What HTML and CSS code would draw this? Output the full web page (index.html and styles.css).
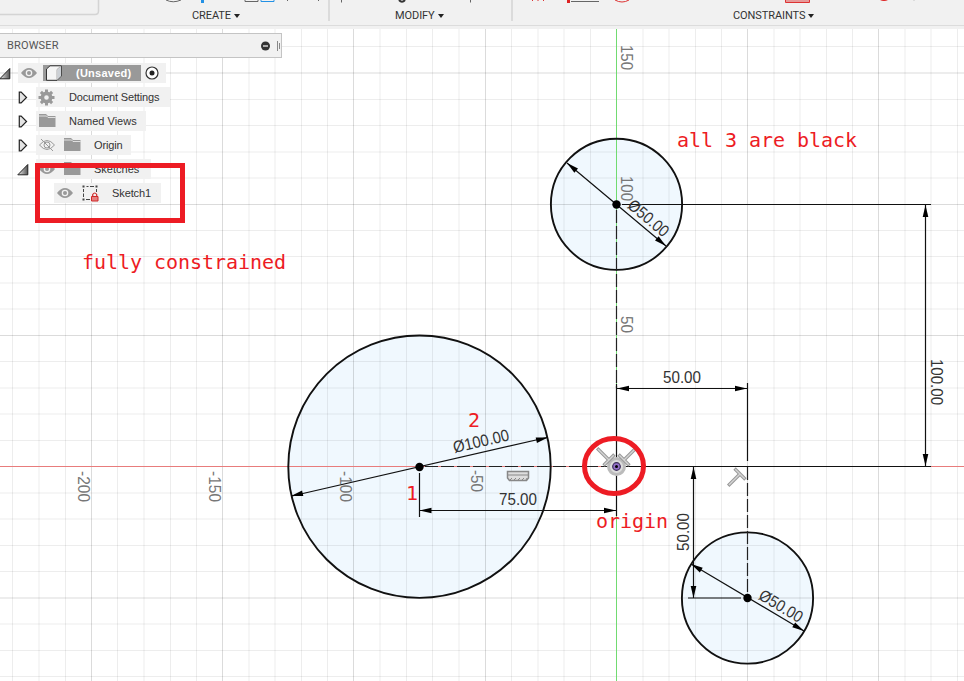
FILE: index.html
```
<!DOCTYPE html>
<html lang="en">
<head>
<meta charset="utf-8">
<title>Sketch</title>
<link rel="stylesheet" href="styles.css">
</head>
<body>
<svg class="canvas" width="964" height="681" viewBox="0 0 964 681">
  <defs>
    <path id="arrow" d="M0 0L-12 -2.8V2.8Z"/>
    <g id="perp" fill="none" stroke-linecap="square"><path class="glyph-edge" d="M-6 0H6M0 0V15"/><path class="glyph-core" d="M-6 0H6M0 0V15"/></g>
  </defs>
  <g class="fill"><circle cx="616.5" cy="204.3" r="65.6"/><circle cx="419.5" cy="466.7" r="131.2"/><circle cx="747.5" cy="598" r="65.6"/></g>
  <path class="minor" d="M12.5 0V681M39 0V681M65.5 0V681M117.5 0V681M144 0V681M170.5 0V681M196.5 0V681M249 0V681M275 0V681M301.5 0V681M327.5 0V681M380 0V681M406.5 0V681M432.5 0V681M459 0V681M511.5 0V681M538 0V681M564 0V681M590.5 0V681M643 0V681M669 0V681M695.5 0V681M721.5 0V681M774 0V681M800 0V681M826.5 0V681M852.5 0V681M905 0V681M931 0V681M957.5 0V681M0 46.5H964M0 99.5H964M0 125.5H964M0 152H964M0 178H964M0 230.5H964M0 256.5H964M0 283H964M0 309H964M0 361.5H964M0 388H964M0 414H964M0 440.5H964M0 493H964M0 519H964M0 545.5H964M0 571.5H964M0 624H964M0 650.5H964M0 676.5H964"/>
  <path class="major" d="M91.5 0V681M222.5 0V681M353.5 0V681M485.5 0V681M747.5 0V681M878.5 0V681M0 73H964M0 204.5H964M0 335.5H964M0 598H964"/>
  <path class="x-axis" d="M0 466.5H964"/>
  <path class="y-axis" d="M616.5 0V681"/>
  <g class="scale">
    <text transform="translate(621 45) rotate(90)" textLength="25" lengthAdjust="spacingAndGlyphs">150</text>
    <text transform="translate(621 176) rotate(90)" textLength="25" lengthAdjust="spacingAndGlyphs">100</text>
    <text transform="translate(621 316) rotate(90)" textLength="17" lengthAdjust="spacingAndGlyphs">50</text>
    <text transform="translate(77.500 471) rotate(90)" textLength="31" lengthAdjust="spacingAndGlyphs">-200</text>
    <text transform="translate(208.500 471) rotate(90)" textLength="31" lengthAdjust="spacingAndGlyphs">-150</text>
    <text transform="translate(340 471) rotate(90)" textLength="31" lengthAdjust="spacingAndGlyphs">-100</text>
    <text transform="translate(471 470) rotate(90)" textLength="22" lengthAdjust="spacingAndGlyphs">-50</text>
  </g>
  <g class="outline"><circle cx="616.5" cy="204.3" r="65.6"/><circle cx="419.5" cy="466.7" r="131.2"/><circle cx="747.5" cy="598" r="65.6"/></g>
  <path class="dashed" d="M616.5 210V388M425 466.5H616M747.5 467V592"/>
  <path class="thin" d="M616.5 384V516M616 466.5H747M747 466.5H931M622 204.5H931M747.5 383V461M419.5 473V517M419.5 510.5H616M616.5 388.5H747M925.5 205V466M693.5 467V598M688 598H741M567 163L666 246M292 496L547 437.500M692 564.500L804 631"/>
  <g>
    <use href="#arrow" transform="translate(567 163) rotate(220)"/><use href="#arrow" transform="translate(666 246) rotate(40)"/>
    <use href="#arrow" transform="translate(291 496) rotate(167)"/><use href="#arrow" transform="translate(548 437.5) rotate(-13)"/>
    <use href="#arrow" transform="translate(691 564) rotate(211)"/><use href="#arrow" transform="translate(804 631) rotate(31)"/>
    <use href="#arrow" transform="translate(419.500 510.500) rotate(180)"/><use href="#arrow" transform="translate(616 510.500)"/>
    <use href="#arrow" transform="translate(617 388.500) rotate(180)"/><use href="#arrow" transform="translate(747 388.500)"/>
    <use href="#arrow" transform="translate(925.500 205) rotate(-90)"/><use href="#arrow" transform="translate(925.500 466) rotate(90)"/>
    <use href="#arrow" transform="translate(693.500 467) rotate(-90)"/><use href="#arrow" transform="translate(693.500 598) rotate(90)"/>
    <circle cx="616.500" cy="204.500" r="4.200"/><circle cx="419.500" cy="467" r="4.200"/><circle cx="747.500" cy="598" r="4.200"/>
  </g>
  <g class="dimension">
    <text x="663" y="383" textLength="38" lengthAdjust="spacingAndGlyphs">50.00</text>
    <text x="499" y="505" textLength="38" lengthAdjust="spacingAndGlyphs">75.00</text>
    <text transform="translate(931 359) rotate(90)" textLength="46" lengthAdjust="spacingAndGlyphs">100.00</text>
    <text transform="translate(688.500 551) rotate(-90)" textLength="38" lengthAdjust="spacingAndGlyphs">50.00</text>
    <text transform="translate(454.500 453) rotate(-13)" textLength="57" lengthAdjust="spacingAndGlyphs">Ø100.00</text>
    <text transform="translate(626.500 207) rotate(40)" textLength="48" lengthAdjust="spacingAndGlyphs">Ø50.00</text>
    <text transform="translate(757.500 598.500) rotate(31)" textLength="48" lengthAdjust="spacingAndGlyphs">Ø50.00</text>
  </g>
  <g>
    <circle class="origin-halo" cx="616.500" cy="466.500" r="8"/>
    <use href="#perp" transform="translate(609 460) rotate(135)"/>
    <use href="#perp" transform="translate(624 460) rotate(225)"/>
    <use href="#perp" transform="translate(740 474) rotate(45)"/>
    <circle class="origin-dot" cx="616.500" cy="466.500" r="3.800"/><circle cx="616.500" cy="466.500" r="1.500"/>
    <path class="ruler" d="M507.500 471.500H528.500V478L526.500 480.500H509.500L507.500 478Z"/>
    <path class="ruler-lines" d="M508 475H528M510 480l2-2m2 2l2-2m2 2l2-2m2 2l2-2m2 2l1-2"/>
  </g>
  <ellipse class="mark-ring" cx="614" cy="466" rx="29.500" ry="27.500"/>
  <g class="note">
    <text x="677" y="147" textLength="180">all 3 are black</text>
    <text x="82" y="269" textLength="204">fully constrained</text>
    <text x="596" y="528" textLength="72">origin</text>
    <text x="406" y="500">1</text><text x="468" y="427">2</text>
  </g>
</svg>

<header class="toolbar">
  <svg class="toolbar-icons" width="964" height="28" viewBox="0 0 964 28">
    <path class="frame" d="M0 14.500H95Q98.500 14.500 98.500 11V0"/>
    <path class="divider" d="M329 0V21M512 0V21"/>
    <path class="dark-line" d="M166 0Q173 3.500 181 0M245 0V1.500H258V0M287.500 0V1M318.500 0V1M341.500 0V2.500M470.500 0V2.500M571 1.500H599"/>
    <path class="blue-line" d="M261 0V1.500H274V0"/><path class="blue-fill" d="M201 0h3v3h-3z"/>
    <path class="dark-curve" d="M399 0Q402 3.500 405 0"/>
    <path class="red-line" d="M533 0l-1 1M538 0v1M543 0l1 1M615 0Q622 4 629 0"/>
    <path class="red-fill" d="M567 0h3v3h-3zM880 0h8q-4 2-8 0z"/>
    <path class="red-box" d="M785.500 0V2.500H809.500V0"/><path class="divider" d="M914 0v1"/>
  </svg>
  <span class="menu create">CREATE</span>
  <span class="menu modify">MODIFY</span>
  <span class="menu constraints">CONSTRAINTS</span>
</header>

<aside class="browser">
  <div class="panel-head"><span class="panel-title">BROWSER</span>
    <svg width="20" height="16" viewBox="0 0 20 16"><circle cx="5.500" cy="8" r="4.500" fill="#333"/><path d="M3 8H8" stroke="#fff" stroke-width="1.200"/><path d="M17.500 3V13M19.500 5V11" stroke="#888"/></svg>
  </div>
  <svg class="symbols" width="0" height="0">
    <symbol id="open" viewBox="0 0 12 12"><linearGradient id="g"><stop offset="0" stop-color="#eee"/><stop offset="1" stop-color="#555"/></linearGradient><path d="M.8 11.300L10.800 1V11.300Z" fill="url(#g)" stroke="#222"/></symbol>
    <symbol id="closed" viewBox="0 0 12 14"><path d="M2 1.200H4L9.800 7L4 12.800H2Z" fill="#e4e4e4" stroke="#222" stroke-width="1.300"/></symbol>
    <symbol id="eye" viewBox="0 0 16 12"><path d="M0 6Q8-4 16 6Q8 16 0 6Z" fill="#999"/><circle cx="8" cy="6" r="3.300" fill="#f2f2f2"/><circle cx="8" cy="6" r="2" fill="#999"/></symbol>
    <symbol id="eye-off" viewBox="0 0 16 12"><path d="M.5 6Q8-3 15.500 6Q8 15 .5 6ZM2 0L14 12" fill="none" stroke="#999"/><circle cx="8" cy="6" r="3" fill="none" stroke="#999"/></symbol>
    <symbol id="folder" viewBox="0 0 17 14"><path d="M0 0H7L9 2H16.500V13H0Z" fill="#999"/><path d="M0 2H7.500L9 3.500H16.500" fill="none" stroke="#f2f2f2" stroke-width=".8"/></symbol>
  </svg>
  <ul class="tree">
    <li class="root"><svg class="arrow"><use href="#open"/></svg><div class="item"><svg class="eye"><use href="#eye"/></svg><span class="selected"><svg width="19" height="16" viewBox="0 0 19 16"><path d="M3.500 4L7 .8H18.300V11L14 15.300H3.500Z" fill="#f5f5f5" stroke="#333"/><path d="M14 15V4.500L18 1" fill="none" stroke="#aaa"/><path d="M14.500 5L18 1.500V11L14.500 14.500Z" fill="#ccd0d5"/></svg><b>(Unsaved)</b></span><svg width="14" height="14" viewBox="0 0 14 14"><circle cx="7" cy="7" r="6" fill="#fff" stroke="#333" stroke-width="1.200"/><circle cx="7" cy="7" r="2.500" fill="#222"/></svg></div></li>
    <li class="child"><svg class="arrow"><use href="#closed"/></svg><div class="item settings"><svg width="17" height="17" viewBox="-8.500 -8.500 17 17"><circle r="4.100" fill="none" stroke="#999" stroke-width="3.600"/><path d="M0-8V-5M0 5V8M-8 0H-5M5 0H8M-5.600-5.600L-3.600-3.600M3.600 3.600L5.600 5.600M-5.600 5.600L-3.600 3.600M3.600-3.600L5.600-5.600" stroke="#999" stroke-width="3"/></svg><span>Document Settings</span></div></li>
    <li class="child"><svg class="arrow"><use href="#closed"/></svg><div class="item views"><svg class="folder"><use href="#folder"/></svg><span>Named Views</span></div></li>
    <li class="child"><svg class="arrow"><use href="#closed"/></svg><div class="item origin"><svg class="eye"><use href="#eye-off"/></svg><svg class="folder"><use href="#folder"/></svg><span>Origin</span></div></li>
    <li class="child"><svg class="arrow"><use href="#open"/></svg><div class="item sketches"><svg class="eye"><use href="#eye"/></svg><svg class="folder"><use href="#folder"/></svg><span>Sketches</span></div></li>
    <li class="leaf"><div class="item sketch"><svg class="eye"><use href="#eye"/></svg><svg width="17" height="17" viewBox="0 0 17 17"><path d="M4.500 1.500H6.500M8 1.500H12M14.500 4V7M1.500 4V7M1.500 8.500V12M4 14.500H8" fill="none" stroke="#444"/><path d="M.5.5h2v2h-2zM13.500.5h2v2h-2zM.5 13.500h2v2h-2z" fill="#444"/><path d="M10.700 11V9.500Q12.700 6.500 14.700 9.500V11" fill="none" stroke="#cf2929" stroke-width="1.200"/><path d="M9.500 11.500h6.500v4.500H9.500z" fill="#e58080" stroke="#cf2929"/></svg><span>Sketch1</span></div></li>
  </ul>
</aside>
<div class="mark-box"></div>
</body>
</html>
```
FILE: styles.css
```
* { box-sizing: border-box; }
body { margin: 0; width: 964px; height: 681px; overflow: hidden; position: relative; background: #fff; font-family: "Liberation Sans", Arial, sans-serif; }
.canvas { position: absolute; inset: 0; }
.fill { fill: #f0f8fe; }
.minor, .major, .x-axis, .y-axis { fill: none; stroke-width: 1; }
.minor { stroke: #000; stroke-opacity: .07; }
.major { stroke: #000; stroke-opacity: .14; }
.x-axis { stroke: #e87c7c; }
.y-axis { stroke: #71db71; }
.outline { fill: none; stroke: #111; stroke-width: 1.9; }
.dashed { fill: none; stroke: #222; stroke-width: 1.2; stroke-dasharray: 13 3; }
.thin { fill: none; stroke: #111; stroke-width: 1.2; }
.scale { font-size: 16px; fill: #777; }
.dimension { font-size: 16.500px; fill: #333; }
.note { font: 20px "DejaVu Sans Mono", monospace; fill: #ed1c24; }
.mark-ring { fill: none; stroke: #ed1c24; stroke-width: 5; }
.glyph-edge { stroke: #999; stroke-width: 3.400; }
.glyph-core { stroke: #d5d5d5; stroke-width: 1.400; }
.origin-halo { fill: #ddd; stroke: #bbb; stroke-width: 3; }
.origin-dot { fill: #9471c9; stroke: #3c2e58; stroke-width: 1.200; }
.ruler { fill: #ddd; stroke: #888; stroke-width: 1.500; }
.ruler-lines { fill: none; stroke: #888; }

.toolbar { position: relative; height: 29px; background: #f1f1f1; display: flex; align-items: flex-start; padding-top: 9px; font: 11px/14px Roboto, sans-serif; color: #333; }
.toolbar::after { content: ""; position: absolute; left: 0; right: 0; top: 25px; height: 1px; background: #dcdcdc; }
.toolbar-icons { position: absolute; left: 0; top: 0; fill: none; }
.frame, .divider { stroke: #d4d4d4; stroke-width: 1.500; }
.dark-line { stroke: #666; }
.dark-curve { stroke: #333; stroke-width: 2; }
.blue-line { stroke: #2391e5; }
.blue-fill { fill: #2391e5; }
.red-line { stroke: #d33; }
.red-fill { fill: #d22; }
.red-box { fill: #e79a9a; stroke: #d33; }
.menu { display: flex; align-items: center; gap: 3px; letter-spacing: -.08px; }
.menu::after { content: ""; border: 3px solid transparent; border-top: 4px solid #222; border-bottom: 0; margin-top: -1px; }
.create { margin-left: 192px; width: 203px; }
.modify { width: 338px; }

.browser { position: relative; width: 282px; }
.panel-head { height: 25px; margin-top: 4px; display: flex; align-items: center; justify-content: space-between; background: #f1f1f1; border: 1px solid #c4c4c4; border-left: 0; padding: 0 1px 0 7px; }
.panel-title { font: 11px Roboto, sans-serif; color: #555; letter-spacing: .15px; }
.symbols { position: absolute; }
.tree { list-style: none; margin: 3px 0 0; padding: 0; font-size: 11px; color: #333; }
.tree li { height: 24px; display: flex; align-items: center; }
.arrow { width: 12px; height: 13px; flex: none; }
.root .arrow { margin-left: -1px; margin-right: 7px; }
.child { padding-left: 17px; }
.child .arrow { margin-right: 7px; }
.leaf { padding-left: 54px; }
.item { display: flex; align-items: center; height: 20px; background: #f1f1f1; padding-left: 3px; white-space: nowrap; }
.eye { width: 16px; height: 12px; }
.folder { width: 17px; height: 14px; }
.root .item { width: 148px; }
.selected { display: flex; align-items: center; width: 98px; height: 16px; margin: 0 4px 0 6px; background: #999; color: #fff; }
.selected b { margin-left: 14px; letter-spacing: .25px; }
.settings { width: 134px; padding-left: 2px; }
.settings span { margin-left: 14px; letter-spacing: -.16px; }
.views { width: 110px; }
.views span { margin-left: 13px; letter-spacing: 0; }
.origin { width: 95px; }
.sketches { width: 115px; }
.origin .folder, .sketches .folder { margin: 0 13px 0 9px; }
.origin span { letter-spacing: -.15px; }
.sketch { width: 107px; }
.sketch .eye { margin-right: 9px; }
.sketch span { margin-left: 13px; letter-spacing: -.1px; }
.mark-box { position: absolute; left: 35px; top: 163px; width: 150px; height: 60px; border: 5px solid #ed1c24; }
```
